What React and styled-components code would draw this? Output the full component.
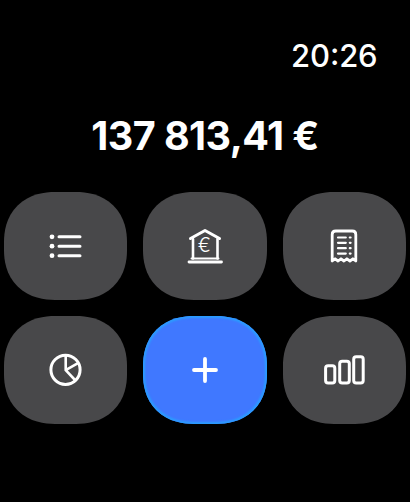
import React from "react";
import styled, { createGlobalStyle } from "styled-components";

const GlobalStyle = createGlobalStyle`
  html, body { margin: 0; background: #000; }
  * { box-sizing: border-box; }
`;

const Screen = styled.main`
  width: 410px;
  height: 502px;
  background: #000;
  color: #fff;
  font-family: Inter, "Noto Sans", sans-serif;
  display: flex;
  flex-direction: column;
  overflow: hidden;
`;

const StatusBar = styled.header`
  display: flex;
  justify-content: flex-end;
  padding: 36px 32.5px 0 0;
  height: 76px;
`;

const Clock = styled.time`
  font-size: 31px;
  line-height: 40px;
  font-weight: 550;
  letter-spacing: -0.15px;
`;

const Colon = styled.span`
  position: relative;
  top: -2px;
`;

const Balance = styled.h1`
  margin: 34px 0 0;
  height: 52px;
  font-size: 39.5px;
  line-height: 52px;
  font-weight: 700;
  text-align: center;
  white-space: nowrap;
  letter-spacing: -0.55px;
`;

const Actions = styled.nav`
  margin-top: 29.5px;
  padding-left: 4px;
  display: grid;
  grid-template-columns: 123px 124.5px 123.5px;
  grid-template-rows: 108.5px 108.5px;
  gap: 15.5px;
`;

const Action = styled.button`
  margin: 0;
  padding: 0;
  border: 0;
  border-radius: 50px;
  @supports (corner-shape: superellipse(1.2)) {
    border-radius: 51px / 50px;
    corner-shape: superellipse(1.15);
  }
  display: flex;
  align-items: center;
  justify-content: center;
  color: #fff;
  background: ${(p) => (p.$primary ? "#4078ff" : "#48484a")};
  box-shadow: ${(p) => (p.$primary ? "inset 0 0 2px 2px #2a9cff" : "none")};
`;

const Glyph = styled.svg`
  display: block;
  width: 44px;
  height: 44px;
  fill: none;
  stroke: currentColor;
  stroke-width: 3;
  stroke-linecap: round;
  stroke-linejoin: round;
`;

const EuroSign = styled.text`
  font: 300 19.5px Inter, sans-serif;
  fill: currentColor;
  stroke: none;
`;

const ListGlyph = () => (
  <Glyph viewBox="0 0 44 44">
    <path d="M15 12.8H36M15 22.2H36M15 31.7H36" />
    <g fill="currentColor" stroke="none">
      <circle cx="8" cy="12.8" r="2.4" />
      <circle cx="8" cy="22.2" r="2.4" />
      <circle cx="8" cy="31.7" r="2.4" />
    </g>
  </Glyph>
);

const BankGlyph = () => (
  <Glyph viewBox="0 0 44 44">
    <path d="M7.5 14.5 22 6.5 36.5 14.5" />
    <path strokeWidth="2.6" d="M10 15V34.5M34.5 15V34.5" />
    <path strokeWidth="2" d="M8.5 34.5H35.5" />
    <path strokeWidth="2.8" d="M6 38H38.5" />
    <EuroSign x="14.8" y="28.4">€</EuroSign>
  </Glyph>
);

const ReceiptGlyph = () => (
  <Glyph viewBox="0 0 44 44">
    <path
      strokeWidth="2.8"
      d="M10.2 37V10.5Q10.2 7 13.7 7H30.3Q33.8 7 33.8 10.5V37L30.9 34.8L27.9 37L24.9 34.8L22 37L19 34.8L16.1 37L13.1 34.8Z"
    />
    <path
      strokeWidth="2.2"
      d="M16 13.5H23.8M16 18.8H23.8M16 24.2H23.8M16 29.6H23.8M27.8 13.5H28.6M27.8 18.8H28.6M27.8 24.2H28.6M27.8 29.6H28.6"
    />
  </Glyph>
);

const PieGlyph = () => (
  <Glyph viewBox="0 0 44 44">
    <circle cx="21.5" cy="21.8" r="14.6" />
    <path strokeWidth="2.6" d="M21.7 7.5V22.2L31 32M21.7 22.2L34 15.2" />
  </Glyph>
);

const PlusGlyph = () => (
  <Glyph viewBox="0 0 44 44">
    <path strokeWidth="3.8" d="M22 11V33M11 22H33" />
  </Glyph>
);

const BarsGlyph = () => (
  <Glyph viewBox="0 0 44 44">
    <rect x="3.6" y="17.7" width="9.2" height="17.3" rx="2.5" />
    <rect x="17.7" y="13.3" width="9.6" height="21.7" rx="2.5" />
    <rect x="31.7" y="8.8" width="9.5" height="26.2" rx="2.5" />
  </Glyph>
);

const ACTIONS = [
  { label: "Transactions", Icon: ListGlyph },
  { label: "Accounts", Icon: BankGlyph },
  { label: "Receipts", Icon: ReceiptGlyph },
  { label: "Categories", Icon: PieGlyph },
  { label: "Add", Icon: PlusGlyph, primary: true },
  { label: "Reports", Icon: BarsGlyph },
];

export default function App() {
  return (
    <Screen>
      <GlobalStyle />
      <StatusBar>
        <Clock>
          20<Colon>:</Colon>26
        </Clock>
      </StatusBar>
      <Balance>137 813,41 €</Balance>
      <Actions>
        {ACTIONS.map(({ label, Icon, primary }) => (
          <Action key={label} aria-label={label} $primary={primary}>
            <Icon />
          </Action>
        ))}
      </Actions>
    </Screen>
  );
}
